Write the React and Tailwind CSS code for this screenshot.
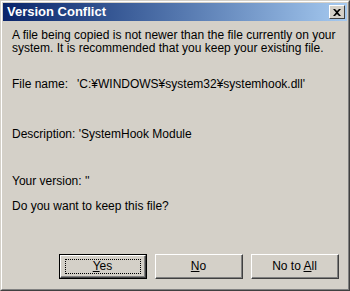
const font = { fontFamily: '"Liberation Sans", Arial, sans-serif' };

function Btn({ u, rest, def }) {
  return (
    <div className={def ? "border border-black" : ""}>
      <div
        className={
          "flex items-center justify-center bg-[#d4d0c8] border-t border-l border-white border-r border-b border-r-[#404040] border-b-[#404040] " +
          (def ? "w-[86px] h-[23px]" : "w-[88px] h-[25px]")
        }
      >
        <div className="flex items-center justify-center h-full w-full border-r border-b border-[#808080]">
          <div
            className={
              "flex items-center justify-center " +
              (def ? "w-[76px] h-[15px] border border-dotted border-black" : "")
            }
          >
            <span className="text-[12px] leading-[13px] text-black">
              {rest[0]}
              <span className="underline">{u}</span>
              {rest[1]}
            </span>
          </div>
        </div>
      </div>
    </div>
  );
}

export default function App() {
  return (
    <div
      className="w-[350px] h-[291px] bg-[#d4d0c8] border-t border-l border-[#d4d0c8] border-r border-b border-r-[#404040] border-b-[#404040]"
      style={font}
    >
      <div className="h-full w-full border-t border-l border-white border-r border-b border-r-[#808080] border-b-[#808080] p-px flex flex-col">
        <div className="h-[18px] flex items-center justify-between pl-[4px] pr-[2px] bg-gradient-to-r from-[#0a246a] to-[#a6caf0]">
          <span className="text-white font-bold text-[13px] leading-[14px]">Version Conflict</span>
          <div className="w-[16px] h-[14px] bg-[#d4d0c8] border-t border-l border-white border-r border-b border-r-[#404040] border-b-[#404040] flex items-center justify-center">
            <svg width="8" height="7" viewBox="0 0 8 7">
              <path d="M0 0h2l2 2 2-2h2L5 3.5 8 7H6L4 5 2 7H0l3-3.5z" fill="#000" />
            </svg>
          </div>
        </div>
        <div className="flex-1 flex flex-col pl-[9px] text-[12px] leading-[13px] text-black">
          <div className="mt-[8px]">
            A file being copied is not newer than the file currently on your
            <br />
            system. It is recommended that you keep your existing file.
          </div>
          <div className="mt-[23px] flex">
            <span className="w-[65px]">File name:</span>
            <span>'C:¥WINDOWS¥system32¥systemhook.dll'</span>
          </div>
          <div className="mt-[37px]">Description: 'SystemHook Module</div>
          <div className="mt-[34px]">Your version: ''</div>
          <div className="mt-[12px]">Do you want to keep this file?</div>
          <div className="mt-[41px] flex gap-[8px] pl-[47px]">
            <Btn def rest={["", "es"]} u="Y" />
            <Btn rest={["", "o"]} u="N" />
            <Btn rest={["No to ", "ll"]} u="A" />
          </div>
        </div>
      </div>
    </div>
  );
}
